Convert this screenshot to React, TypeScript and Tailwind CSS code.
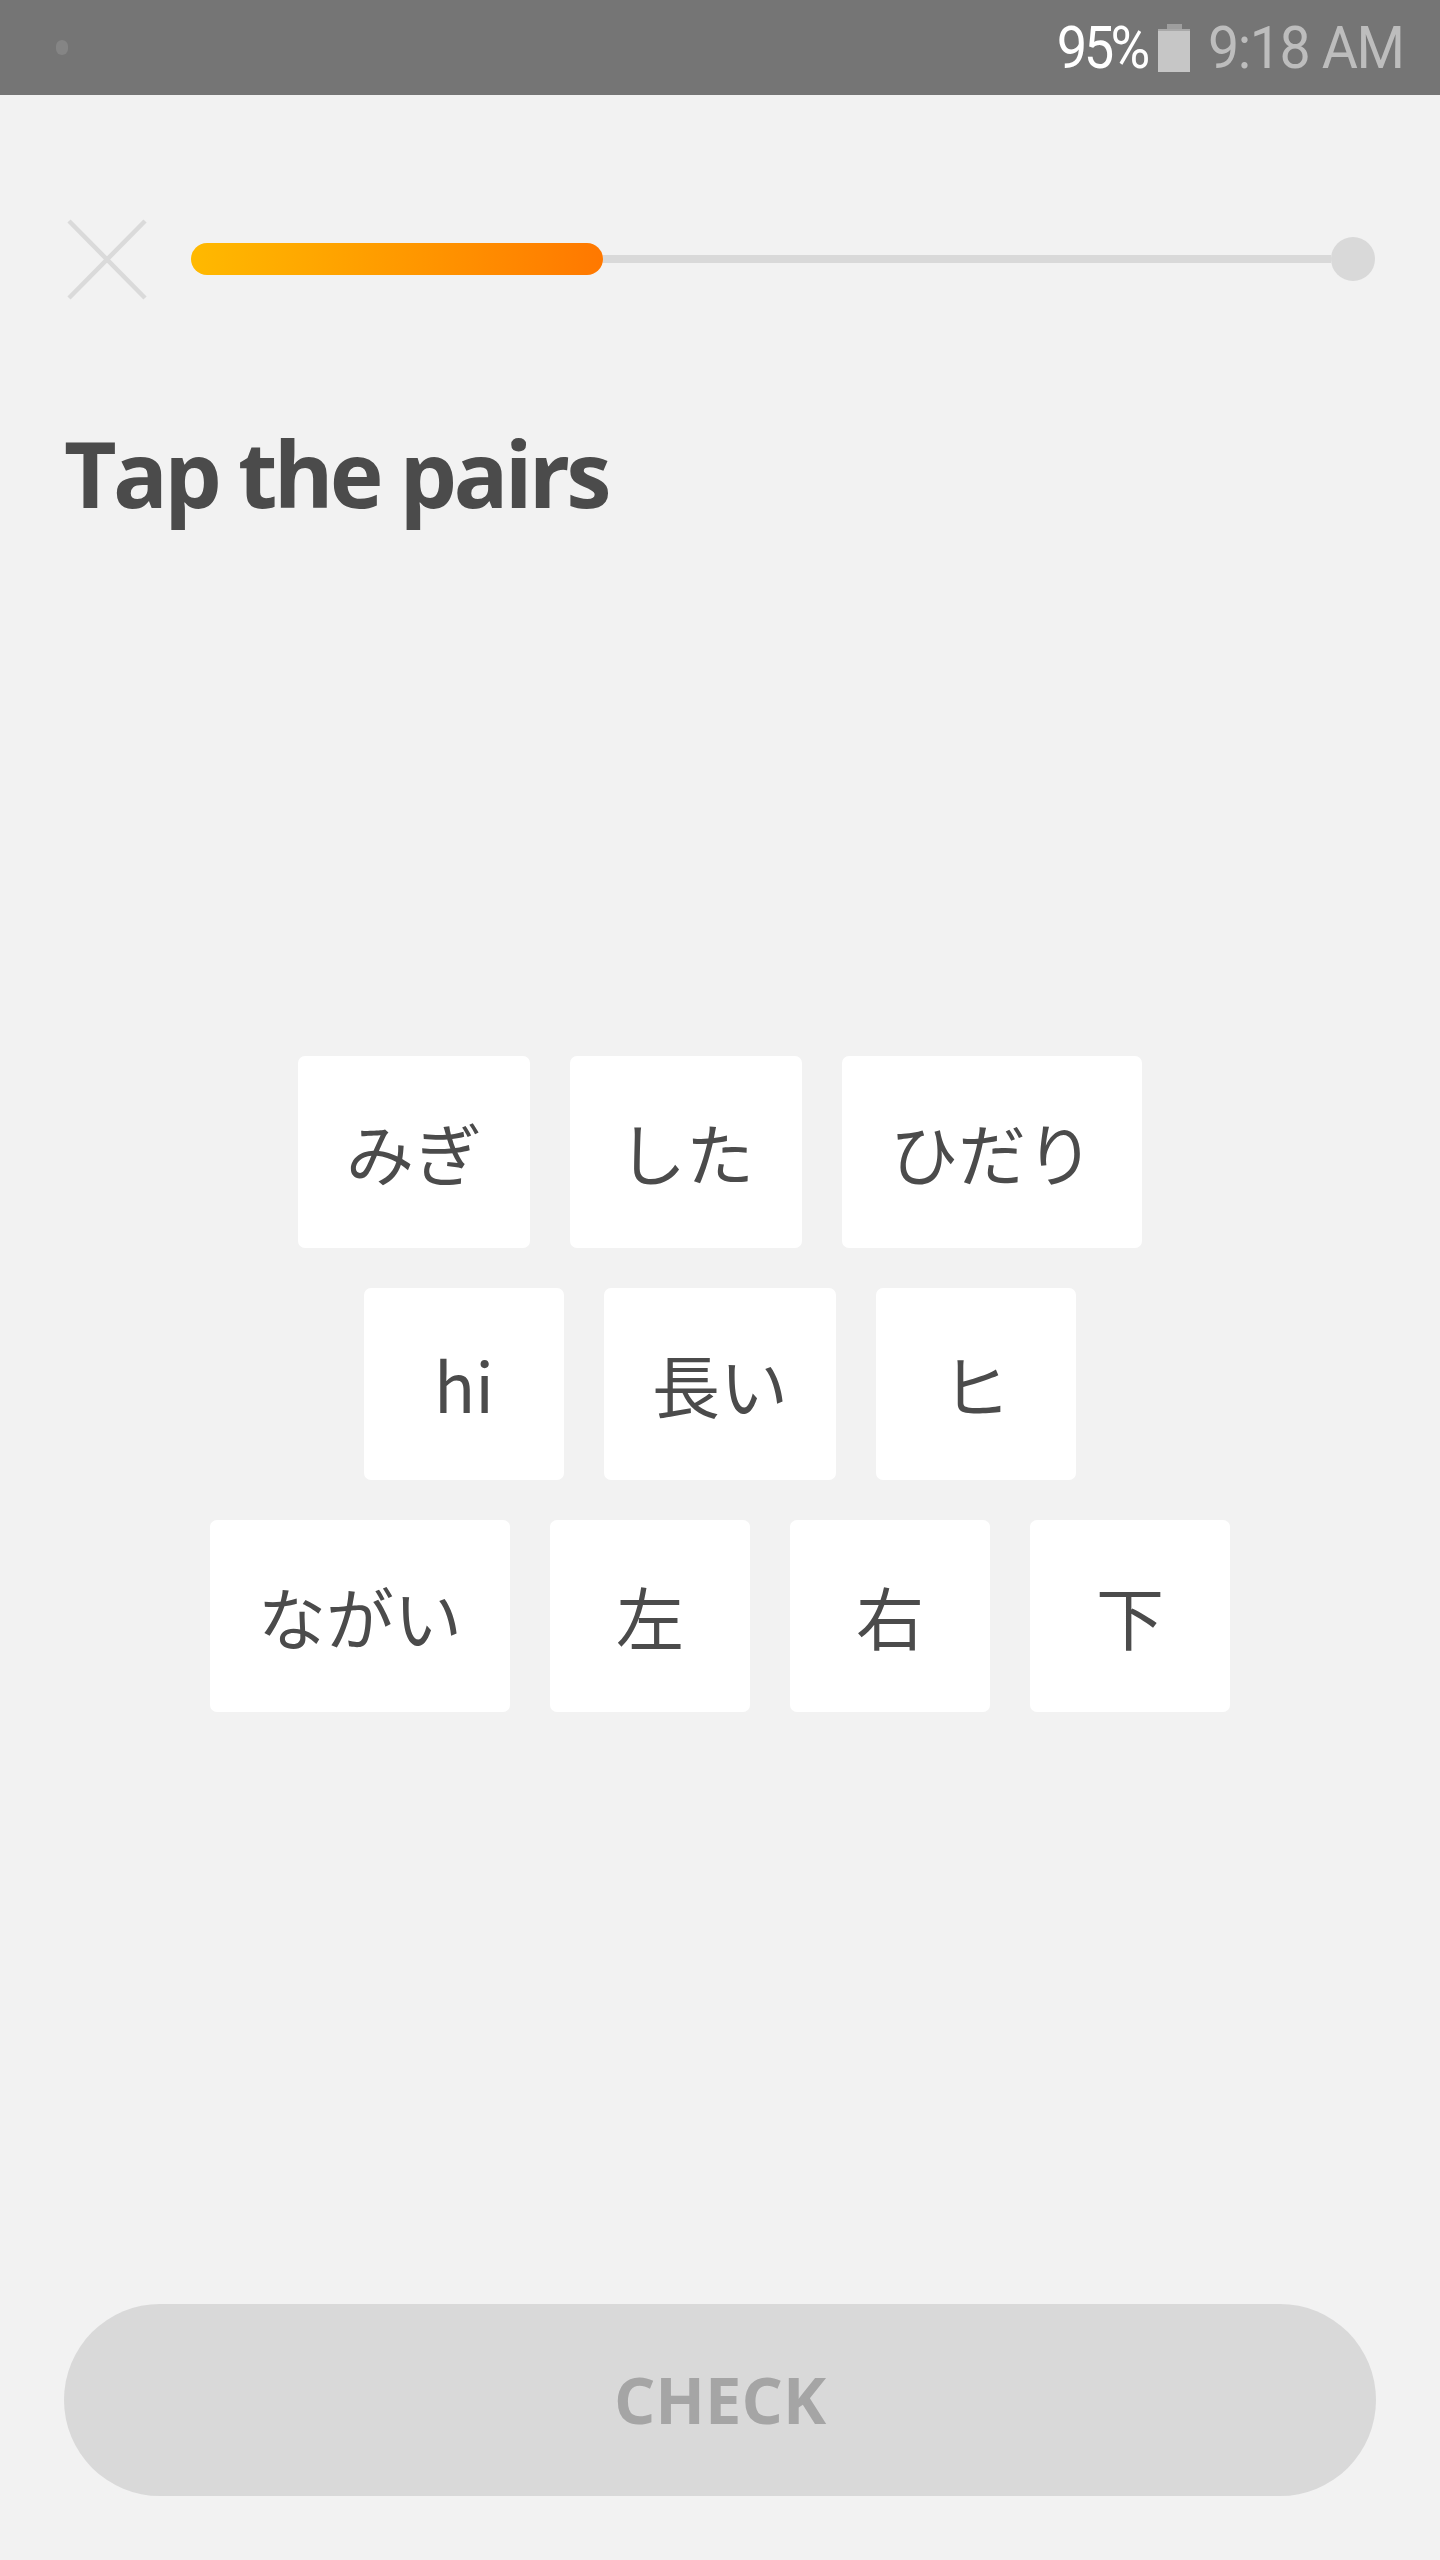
const rows: string[][] = [
  ["みぎ", "した", "ひだり"],
  ["hi", "長い", "ヒ"],
  ["ながい", "左", "右", "下"],
];

function StatusBar() {
  return (
    <div className="h-[95px] bg-[#757575] flex items-center justify-between pl-[56px] pr-[24px]">
      <div className="w-[12px] h-[15px] rounded-full bg-[#858585]" />
      <div className="flex items-center font-['Roboto',sans-serif] text-[59px] leading-none">
        <span className="text-white tracking-[-4px] scale-x-[0.92] origin-right">95%</span>
        <div className="ml-[12px] flex flex-col items-center">
          <div className="w-[15px] h-[5px] bg-[#9e9e9e]" />
          <div className="w-[32px] h-[43px] bg-[#c6c6c6] border-t-[2px] border-[#a8a8a8]" />
        </div>
        <span className="ml-[18px] text-[#bdbdbd] tracking-[-1.5px] scale-x-[0.94] origin-left">9:18 AM</span>
      </div>
    </div>
  );
}

function Header() {
  return (
    <div className="mt-[124px] h-[80px] flex items-center pl-[67px] pr-[65px]">
      <svg width="80" height="81" viewBox="0 0 80 81" className="shrink-0">
        <line x1="2" y1="2" x2="78" y2="79" stroke="#dadada" strokeWidth="4.5" />
        <line x1="78" y1="2" x2="2" y2="79" stroke="#dadada" strokeWidth="4.5" />
      </svg>
      <div className="ml-[44px] flex-1 flex items-center">
        <div className="w-[412px] h-[32px] rounded-full bg-gradient-to-r from-[#ffb900] to-[#ff7800]" />
        <div className="flex-1 h-[8px] bg-[#d9d9d9]" />
        <div className="w-[44px] h-[44px] rounded-full bg-[#d9d9d9]" />
      </div>
    </div>
  );
}

function Tile({ label }: { label: string }) {
  return (
    <button className="h-[192px] min-w-[200px] px-[48px] rounded-[7px] bg-white flex items-center justify-center text-[68px] leading-none text-[#4b4b4b] font-['Noto_Sans_CJK_JP',sans-serif]">
      {label}
    </button>
  );
}

export default function App() {
  return (
    <div className="w-[1440px] h-[2560px] bg-[#f2f2f2] flex flex-col">
      <StatusBar />
      <Header />
      <h1 className="mt-[129px] pl-[64px] text-[91px] leading-none font-bold tracking-[-3.75px] text-[#4b4b4b] font-['Open_Sans',sans-serif]">
        Tap the pairs
      </h1>
      <div className="mt-[537px] flex flex-col items-center gap-[40px]">
        {rows.map((row, i) => (
          <div key={i} className="flex gap-[40px]">
            {row.map((t) => (
              <Tile key={t} label={t} />
            ))}
          </div>
        ))}
      </div>
      <div className="mt-auto mb-[64px] px-[64px]">
        <button className="w-full h-[192px] rounded-full bg-[#d9d9d9] text-[65px] font-bold text-[#a5a5a5] font-['Open_Sans',sans-serif]">
          CHECK
        </button>
      </div>
    </div>
  );
}
